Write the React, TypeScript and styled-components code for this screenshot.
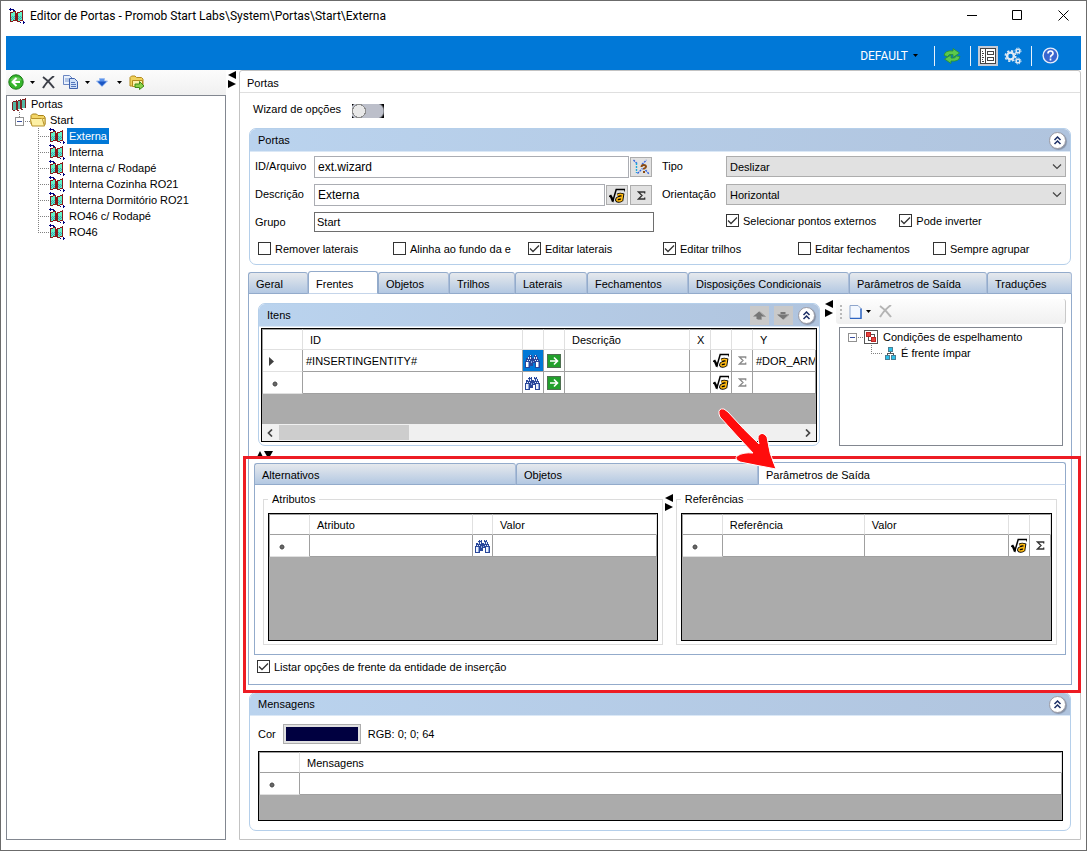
import React, { useState } from "react";
import styled, { createGlobalStyle, css } from "styled-components";

const GlobalStyle = createGlobalStyle`
  * { box-sizing: border-box; }
  body {
    margin: 0;
    background: #fff;
    color: #000;
    font-family: "Liberation Sans", Arial, sans-serif;
    font-size: 11px;
    line-height: 14px;
  }
  button, input, select { font: inherit; color: inherit; margin: 0; }
  button { padding: 0; border: 0; background: none; }
  svg { display: block; flex: none; }
`;

/* ---------- window frame ---------- */

const Window = styled.div`
  display: flex;
  flex-direction: column;
  min-height: 100vh;
  min-width: 1000px;
  border: 1px solid #6b6b6b;
  padding: 0 5px 10px;
`;

const TitleBar = styled.header`
  display: flex;
  align-items: center;
  height: 35px;
  padding: 0 12px 6px 3px;
  gap: 5px;
`;

const Title = styled.h1`
  flex: 1;
  margin: 0;
  font: 400 12px/16px Roboto, "Open Sans", sans-serif;
`;

const WindowButtons = styled.div`
  display: flex;
  gap: 35px;
`;

const Ribbon = styled.div`
  display: flex;
  justify-content: flex-end;
  align-items: center;
  height: 34px;
  padding: 5px 22px 0 0;
  background: #0078d7;
  color: #fff;
`;

const ProfileButton = styled.button`
  display: flex;
  align-items: center;
  gap: 5px;
  margin-right: 16px;
  font: 400 12px/16px Roboto, "Open Sans", sans-serif;
`;

const RibbonRule = styled.span`
  width: 1px;
  height: 20px;
  background: #e8f2fb;
`;

const RibbonButton = styled.button<{ $active?: boolean }>`
  display: grid;
  place-items: center;
  width: 20px;
  height: 20px;
  background: ${(p) => (p.$active ? "#c5cbd6" : "transparent")};
`;

const RibbonGroup = styled.div`
  display: flex;
  gap: 5px;
  padding: 0 8px 0 7px;
`;

const HelpButton = styled.button`
  padding-left: 10px;
`;

const Workspace = styled.div`
  flex: 1;
  display: flex;
`;

/* ---------- left side ---------- */

const Sidebar = styled.aside`
  display: flex;
  flex-direction: column;
  width: 220px;
  flex: none;
`;

const SideTools = styled.div`
  display: flex;
  align-items: center;
  height: 25px;
  padding: 0 0 1px 2px;
  background: linear-gradient(#fcfcfc, #f0f0f0);
`;

const ToolButton = styled.button<{ $space?: number }>`
  margin-right: ${(p) => p.$space ?? 6}px;
`;

const TreeBox = styled.div`
  flex: 1;
  border: 1px solid #828790;
  background: #fff;
`;

const TreeRow = styled.div<{ $indent: number }>`
  display: flex;
  align-items: center;
  height: 16px;
  padding-left: ${(p) => p.$indent}px;
`;

const TreeLabel = styled.span<{ $selected?: boolean }>`
  margin-left: 2px;
  padding: 0 2px;
  line-height: 16px;
  white-space: nowrap;
  ${(p) => p.$selected && css`background: #0078d7; color: #fff;`}
`;

const Splitter = styled.div<{ $width: number; $top: number; $left?: number }>`
  flex: none;
  width: ${(p) => p.$width}px;
  padding: ${(p) => p.$top}px 0 0 ${(p) => p.$left ?? 2}px;
`;

/* ---------- main panel ---------- */

const MainPanel = styled.main`
  flex: 1;
  min-width: 0;
  border: 1px solid #c3c3c3;
  border-radius: 3px 3px 0 0;
`;

const PanelTitle = styled.h2`
  margin: 0;
  height: 22px;
  padding: 5px 7px 0;
  border-bottom: 1px solid #dfdfdf;
  font: inherit;
`;

const PanelContent = styled.div`
  padding: 0 8px 8px;
`;

const WizardRow = styled.label`
  display: flex;
  align-items: center;
  gap: 11px;
  height: 35px;
  padding-left: 5px;
`;

const WizardText = styled.span`
  padding-bottom: 4px;
`;

const Toggle = styled.input.attrs({ type: "checkbox", role: "switch" })`
  appearance: none;
  width: 32px;
  height: 14px;
  background: radial-gradient(circle at 7px 7px, #e8e8e8 0 6px, #8c8c8c 6px 7px, transparent 7px),
    radial-gradient(circle at 7px 7px, #bcbfca 8px, #000 9px) 0 0 / 8px 14px no-repeat,
    radial-gradient(circle at 0px 7px, #bcbfca 7px, #000 9px) 100% 0 / 8px 14px no-repeat,
    #bcbfca;
`;

const GroupFrame = styled.section`
  min-width: 0;
  border: 1px solid #b5cfea;
  border-radius: 7px;
`;

const GroupHeader = styled.header`
  display: flex;
  align-items: center;
  gap: 5px;
  height: 23px;
  padding: 0 4px 0 8px;
  border-bottom: 1px solid #dbe8f6;
  border-radius: 6px 6px 0 0;
  background: linear-gradient(90deg, #bad3ee, #b0c4de);
`;

const GroupTitle = styled.h3`
  flex: 1;
  margin: 0;
  font: inherit;
`;

const CollapseButton = styled.button`
  display: grid;
  place-items: center;
  width: 17px;
  height: 17px;
  border: 1px solid #9a9aa4;
  border-radius: 9px;
  background: #fff;
  box-shadow: 1px 1px 1px #8592a8;
`;

const MoveButton = styled.button`
  display: grid;
  place-items: center;
  width: 19px;
  height: 19px;
  background: #c9c9c9;
`;

const Spaced = styled.div`
  padding: 0 1px;
`;

const FormBody = styled.div`
  display: flex;
  gap: 8px;
  padding: 4px 4px 0 5px;
`;

const FormColumn = styled.div<{ $grow: number }>`
  flex: ${(p) => p.$grow} 1 0;
  min-width: 0;
`;

const FieldRow = styled.div<{ $buttons?: boolean }>`
  display: flex;
  align-items: flex-start;
  gap: 1px;
  height: 28px;
  padding-right: ${(p) => (p.$buttons ? 1 : 0)}px;
`;

const FieldLabel = styled.label<{ $width: number }>`
  flex: none;
  width: ${(p) => p.$width}px;
  padding-top: 3px;
`;

const TextInput = styled.input<{ $plain?: boolean }>`
  flex: 1;
  min-width: 0;
  height: ${(p) => (p.$plain ? 20 : 22)}px;
  padding: 0 ${(p) => (p.$plain ? 2 : 3)}px;
  border: 1px solid ${(p) => (p.$plain ? "#6e6e6e" : "#abadb3")};
  background: #fff;
  font-size: ${(p) => (p.$plain ? 11 : 12)}px;
`;

const SquareButton = styled.button`
  display: grid;
  place-items: center;
  width: 22px;
  height: 20px;
  margin: 1px 1px 0 0;
  border: 1px solid #adadad;
  background: #e1e1e1;
`;

const SelectShell = styled.div`
  flex: 1;
  display: grid;
  align-items: center;
  & > * { grid-area: 1 / 1; }
  & > svg { justify-self: end; margin-right: 4px; pointer-events: none; }
`;

const Select = styled.select`
  appearance: none;
  width: 100%;
  height: 21px;
  padding: 0 3px;
  border: 1px solid #adadad;
  border-radius: 0;
  background: #e1e1e1;
`;

const CheckPair = styled.div`
  display: flex;
  gap: 23px;
  padding: 2px 0 0 64px;
`;

const CheckGrid = styled.div`
  display: grid;
  grid-template-columns: repeat(6, 1fr);
  padding: 2px 2px 9px 8px;
`;

const CheckRow = styled.div`
  padding: 5px 8px 11px;
`;

const CheckLabel = styled.label`
  display: flex;
  align-items: center;
  gap: 4px;
  height: 13px;
  white-space: nowrap;
`;

const CheckBox = styled.input.attrs({ type: "checkbox" })`
  appearance: none;
  flex: none;
  width: 13px;
  height: 13px;
  border: 1px solid #333;
  background: #fff;
`;

const CheckShell = styled.span`
  display: grid;
  place-items: center;
  & > * { grid-area: 1 / 1; }
  & > svg { pointer-events: none; }
`;

/* ---------- tabs ---------- */

const TabStrip = styled.div<{ $columns: number[] }>`
  display: grid;
  grid-template-columns: ${(p) => p.$columns.map((c) => `minmax(0, ${c}fr)`).join(" ")};
  align-items: end;
  height: 23px;
`;

const Tab = styled.button<{ $selected?: boolean }>`
  position: relative;
  height: ${(p) => (p.$selected ? 23 : 22)}px;
  padding: 2px 0 0 7px;
  border: 1px solid #93abcb;
  border-right-color: ${(p) => (p.$selected ? "#93abcb" : "#a9bcd8")};
  border-bottom-color: ${(p) => (p.$selected ? "#c5d5ea" : "#93abcb")};
  border-radius: 3px 3px 0 0;
  background: ${(p) => (p.$selected ? "#fff" : "linear-gradient(#e6e9ed, #b3c8e2)")};
  text-align: left;
  white-space: nowrap;
`;

const TabPage = styled.div`
  border: 1px solid #93abcb;
  border-top: 0;
`;

const Pointer = styled.svg`
  position: absolute;
  left: -43px;
  top: -57px;
  z-index: 3;
  pointer-events: none;
`;

const ItemsArea = styled.div`
  display: flex;
  padding: 0 5px 0 9px;
`;

const ItemsColumn = styled.div`
  flex: 562 1 0;
  min-width: 0;
  padding-top: 9px;
`;

const ItemsBody = styled.div`
  padding: 1px 2px 3px;
`;

const ConditionColumn = styled.div`
  flex: 230 1 0;
  display: flex;
  flex-direction: column;
  padding-top: 5px;
`;

const ConditionTools = styled.div`
  display: flex;
  align-items: center;
  height: 25px;
  padding-left: 4px;
  border-right: 1px solid #c9c9c9;
  border-radius: 3px;
  background: linear-gradient(#fdfdfd, #f0f0f0);
`;

const ConditionTree = styled(TreeBox)`
  margin: 3px 3px 0;
  padding-top: 1px;
`;

const OutputPane = styled.div`
  position: relative;
`;

const Highlight = styled.div`
  position: absolute;
  inset: 10px -10px -9px -6px;
  z-index: 2;
  border: 3px solid #ed1c24;
  pointer-events: none;
`;

const RowSplitter = styled.div`
  height: 16px;
  padding: 5px 0 0 7px;
`;

const InnerTabs = styled.div`
  padding: 0 5px;
`;

const OutputBody = styled.div`
  display: flex;
  padding: 7px 8px 9px;
`;

const Fieldset = styled.fieldset<{ $grow: number }>`
  flex: ${(p) => p.$grow} 1 0;
  min-width: 0;
  margin: 0;
  padding: 7px 4px 3px;
  border: 1px solid #dcdcdc;
`;

const Legend = styled.legend`
  padding: 0 4px;
`;

/* ---------- data grids ---------- */

const GridFrame = styled.div<{ $height: number }>`
  display: flex;
  flex-direction: column;
  justify-content: space-between;
  height: ${(p) => p.$height}px;
  border: 1px solid #000;
  background: #ababab;
  overflow: hidden;
`;

const Table = styled.table`
  width: 100%;
  table-layout: fixed;
  border-collapse: separate;
  border-spacing: 0;
  border-left: 1px solid #a0a0a0;
  background: #fff;
`;

const HeadCell = styled.th<{ $line?: string }>`
  height: 21px;
  padding: 0 6px 0 7px;
  border-top: 1px solid #a0a0a0;
  border-bottom: 1px solid ${(p) => p.$line ?? "#a0a0a0"};
  border-right: 1px solid #e0e0e0;
  font-weight: 400;
  text-align: left;
  white-space: nowrap;
`;

const Cell = styled.td<{ $selected?: boolean }>`
  height: 22px;
  padding: 0 0 0 3px;
  border-bottom: 1px solid #a0a0a0;
  border-right: 1px solid #a0a0a0;
  background: ${(p) => (p.$selected ? "#0078d7" : "#fff")};
  white-space: nowrap;
  overflow: hidden;
`;

const IconCell = styled(Cell)`
  padding: 0;
  & > svg, & > button > svg { margin: 0 auto; }
  & > button { display: block; width: 100%; }
`;

const RowHead = styled.th`
  height: 22px;
  padding: 2px 0 0 6px;
  border-bottom: 1px solid #e0e0e0;
  border-right: 1px solid #a0a0a0;
`;

const ScrollBar = styled.div`
  display: flex;
  align-items: center;
  height: 17px;
  padding: 0 5px;
  background: #f0f0f0;
`;

const ScrollTrack = styled.div`
  flex: 1;
  padding: 0 6px;
`;

const ScrollThumb = styled.div`
  width: 25%;
  height: 15px;
  background: #cdcdcd;
`;

const MessagesBody = styled.div`
  padding: 8px 7px 9px 8px;
`;

const ColorRow = styled.div`
  display: flex;
  align-items: center;
  height: 20px;
  margin-bottom: 7px;
  gap: 7px;
`;

const ColorButton = styled.button`
  width: 78px;
  height: 20px;
  border: 1px solid #adadad;
  padding: 2px;
  background: #e1e1e1;
`;

const ColorFill = styled.span`
  display: block;
  height: 14px;
  background: #000040;
`;

const Gap = styled.div<{ $height: number }>`
  height: ${(p) => p.$height}px;
`;

/* ---------- icons ---------- */

const DoorIcon = () => (
  <svg width="16" height="16" viewBox="0 0 16 16" shapeRendering="crispEdges">
    <path d="M2 4h4v9h-4zM9 4h4v9h-4z" fill="#63f2c8" />
    <path d="M3 8h1v1h-1zM5 8h1v1h-1zM2 9h1v1h-1zM4 9h1v1h-1zM3 10h1v1h-1zM5 10h1v1h-1zM4 11h1v1h-1zM2 11h1v1h-1zM9 8h1v1h-1zM11 8h1v1h-1zM10 9h1v1h-1zM12 9h1v1h-1zM9 10h1v1h-1zM11 10h1v1h-1zM10 11h1v1h-1z" fill="#3aa7b8" />
    <path d="M1 4h1v10h-1zM2 13h2v1h-2zM4 12h2v1h-2zM2 4h2v1h-2zM4 3h2v1h-2zM6 3h1v10h-1zM7 5h1v8h-1zM8 4h1v10h-1zM9 13h2v1h-2zM11 12h2v1h-2zM9 4h2v1h-2zM11 3h2v1h-2zM13 2h1v11h-1z" fill="#861919" />
    <path d="M0 1h1v-1h1v1h3v1h1v1h-2v-1h-2v1h-1v-1h-1zM10 14h2v1h2v-2h1v1h1v1h-1v1h-1v-1h-3v-1h-1z" fill="#000080" />
  </svg>
);

const DoorsIcon = () => (
  <svg width="15" height="15" viewBox="0 0 15 15" shapeRendering="crispEdges">
    <path d="M1 4h3v9h-3zM6 3h3v9h-3zM10 2h4v9h-4z" fill="#55b8a3" />
    <path d="M0 5h1v8h-1zM4 3h1v10h-1zM5 4h1v9h-1zM8 2h1v10h-1zM9 3h1v9h-1zM13 1h1v10h-1zM1 4h3v1h-3zM6 3h2v1h-2zM10 2h3v1h-3zM1 13h2v1h-2zM5 13h2v1h-2zM9 12h2v1h-2z" fill="#7c2222" />
  </svg>
);

const FolderIcon = () => (
  <svg width="16" height="14" viewBox="0 0 16 14">
    <path d="M1 11V2.500L2.500 1h4L8 2.500h5.500L15 4v7z" fill="#f3d567" stroke="#a8841a" />
    <path d="M2 13L.5 6.500 1.500 5.500h10l1 1L14.500 13z M12 6l3-1v7" fill="#fdf0a4" stroke="#b8922a" />
  </svg>
);

const Expander = () => (
  <svg width="15" height="16" viewBox="0 0 15 16" shapeRendering="crispEdges">
    <path d="M4.500 0v5" stroke="#808080" strokeDasharray="1 1" />
    <path d="M10 9.500h5" stroke="#808080" strokeDasharray="1 1" />
    <rect x=".5" y="5.500" width="8" height="8" fill="#fff" stroke="#919191" />
    <path d="M2 9.500h5" stroke="#3a4fa0" />
  </svg>
);

const CenterExpander = () => (
  <svg width="16" height="16" viewBox="0 0 16 16" shapeRendering="crispEdges">
    <path d="M10 8.500h6" stroke="#808080" strokeDasharray="1 1" />
    <rect x=".5" y="4.500" width="8" height="8" fill="#fff" stroke="#919191" />
    <path d="M2 8.500h5" stroke="#3a4fa0" />
  </svg>
);

const Branch = ({ last }: { last?: boolean }) => (
  <svg width="11" height="16" viewBox="0 0 11 16" shapeRendering="crispEdges">
    <path d={last ? "M.5 0v9" : "M.5 0v16"} stroke="#808080" strokeDasharray="1 1" />
    <path d="M2 8.500h9" stroke="#808080" strokeDasharray="1 1" />
  </svg>
);

const Caret = () => (
  <svg width="5" height="3" viewBox="0 0 5 3"><path d="M0 0h5L2.500 3z" fill="#000" /></svg>
);

const BackIcon = () => (
  <svg width="16" height="16" viewBox="0 0 16 16">
    <circle cx="8" cy="8" r="7.200" fill="#35b52c" stroke="#1c7a18" />
    <path d="M2.500 6a6 5 0 0 1 11 0q-5 3-11 0z" fill="#8fdc80" opacity=".6" />
    <path d="M8.500 4L4.500 8l4 4M5 8h7" fill="none" stroke="#fff" strokeWidth="2" />
  </svg>
);

const CutIcon = ({ muted }: { muted?: boolean }) => (
  <svg width="13" height="13" viewBox="0 0 13 13">
    <path d="M1 1q6 4 11 11M12 0Q5 5 1 12" fill="none" stroke={muted ? "#b4b4b4" : "#3c3f48"} strokeWidth="2" />
  </svg>
);

const CopyIcon = () => (
  <svg width="16" height="14" viewBox="0 0 16 14">
    <path d="M.5.5h6l3 3v6h-9z" fill="#e9f1fc" stroke="#6b87c2" />
    <path d="M2 4h4M2 6h4" stroke="#7f9bd0" />
    <path d="M6.500 3.500h5l3 3v7h-8z" fill="#cfe0f8" stroke="#3f62ad" />
    <path d="M8 7.500h4M8 9.500h5M8 11.500h5" stroke="#5577bd" />
  </svg>
);

const BlueDownIcon = () => (
  <svg width="12" height="9" viewBox="0 0 12 9">
    <path d="M3.500.5h5V3h3L6 8.500.5 3h3z" fill="#5a93ec" stroke="#9dbdf0" />
    <path d="M1.500 3.500h9L6 8z" fill="#1c57c4" />
  </svg>
);

const FolderGoIcon = () => (
  <svg width="16" height="15" viewBox="0 0 16 15">
    <path d="M1 11V2.500L2.500 1H6l1.500 1.500h5L14 4v7z" fill="#f0d25c" stroke="#b38a1d" />
    <path d="M3.500 11.500v-6h10v6z" fill="#fdf1a8" stroke="#b38a1d" />
    <path d="M6 9h4.500V6.500l4.500 4.500-4.500 3.500V12.500H6z" fill="#8bd14a" stroke="#3f8a1a" />
  </svg>
);

const SplitArrows = () => (
  <svg width="8" height="17" viewBox="0 0 8 17"><path d="M8 0v8L0 4zM0 9v8l8-4z" fill="#000" /></svg>
);

const StackArrows = () => (
  <svg width="17" height="8" viewBox="0 0 17 8"><path d="M0 8h8L4 0zM8 0h9l-4.500 8z" fill="#000" /></svg>
);

const RefreshIcon = () => (
  <svg width="18" height="18" viewBox="0 0 18 18">
    <path d="M1 8.500Q2 3 10 4V1.500L16.500 6 10 10.500V7.500Q6 6.500 4.500 9.500z" fill="#5cc94c" stroke="#2b8f2a" strokeWidth=".8" />
    <path d="M17 9.500Q16 15 8 14v2.500L1.500 12 8 8V11q4 .8 5.500-2z" fill="#5cc94c" stroke="#2b8f2a" strokeWidth=".8" />
  </svg>
);

const LayoutIcon = () => (
  <svg width="18" height="16" viewBox="0 0 18 16" shapeRendering="crispEdges">
    <rect x="1.500" y=".5" width="15" height="15" fill="#fff" stroke="#444" />
    <path d="M6.500 1v14M3 3.500h1M3 5.500h2M3 7.500h1M3 9.500h2M3 11.500h1M3 13.500h2" stroke="#444" />
    <rect x="8.500" y="3.500" width="6" height="3" fill="#fff" stroke="#444" />
    <rect x="8.500" y="9.500" width="6" height="3" fill="#fff" stroke="#444" />
  </svg>
);

const GearsIcon = () => (
  <svg width="18" height="18" viewBox="0 0 18 18" fill="none" stroke="#dfe9f3">
    <circle cx="6.500" cy="9" r="3.400" strokeWidth="2.400" />
    <circle cx="6.500" cy="9" r="5.200" strokeWidth="1.600" strokeDasharray="2.200 1.880" />
    <circle cx="14" cy="4" r="1.800" strokeWidth="1.500" />
    <circle cx="14" cy="4" r="3" strokeDasharray="1.300 1.060" />
    <circle cx="14" cy="14" r="1.800" strokeWidth="1.500" />
    <circle cx="14" cy="14" r="3" strokeDasharray="1.300 1.060" />
  </svg>
);

const HelpIcon = () => (
  <svg width="17" height="17" viewBox="0 0 17 17">
    <circle cx="8.500" cy="8.500" r="7.400" fill="#3a66cf" stroke="#e8eefa" strokeWidth="1.400" />
    <path d="M6 6.500Q6 4 8.500 4T11 6.500Q11 7.600 9.600 8.300 8.500 9 8.500 10.400M8.500 11.500v2" fill="none" stroke="#fff" strokeWidth="1.700" />
  </svg>
);

const ChevronsUp = () => (
  <svg width="9" height="9" viewBox="0 0 9 9">
    <path d="M1.500 4L4.500 1l3 3M1.500 8l3-3 3 3" fill="none" stroke="#1c2f66" strokeWidth="1.500" />
  </svg>
);

const MoveIcon = ({ down }: { down?: boolean }) => (
  <svg width="13" height="9" viewBox="0 0 13 9">
    <path d={down ? "M3.500 1h5v2.500h3.500L6 8.500 0 3.500h3.500z" : "M6 .5L12 5.500H8.500V8h-5V5.500H0z"} fill="#767676" />
    <path d={down ? "M1 3.500h11L6.500 8.500" : "M6.500.5L12.500 5.500H8.500V8.500h-4"} fill="none" stroke="#9a9a9a" />
  </svg>
);

const SelectChevron = () => (
  <svg width="10" height="6" viewBox="0 0 10 6"><path d="M1 .5L5 4.500 9 .5" fill="none" stroke="#444" strokeWidth="1.200" /></svg>
);

const PickIcon = () => (
  <svg width="18" height="16" viewBox="0 0 18 16">
    <path d="M1.500 1l3.500 3.500" stroke="#2f62e0" strokeWidth="1.400" strokeDasharray="2 1" />
    <path d="M4.500 4v10" stroke="#19a9dc" strokeWidth="1.400" strokeDasharray="2 1" />
    <path d="M5.500 14.500l5-5M10 5.500l4.500-4.500M13.500 11l3.500 4" stroke="#2f62e0" strokeWidth="1.400" strokeDasharray="2 1" />
    <path d="M9.500 8Q9.500 6 11.800 6t2.200 1.800q0 1-2 1.800v1M12 12v2" fill="none" stroke="#8a4b12" strokeWidth="2" />
  </svg>
);

const RootIcon = () => (
  <svg width="16" height="15" viewBox="0 0 16 15">
    <path d="M0 8.500l1.800-1L4 12.500 7.200 1.500H16v2" fill="none" stroke="#000" strokeWidth="1.500" />
    <path d="M1.800 8L4 13.500" stroke="#000" strokeWidth="2.200" />
    <path d="M8.500 7.200Q11 5.800 13.500 6.800L12.500 13M13 9.700Q8 9.300 7.800 12q.8 2 4.800.2" fill="none" stroke="#000" strokeWidth="3.400" />
    <path d="M8.500 7.200Q11 5.800 13.500 6.800L12.500 13M13 9.700Q8 9.300 7.800 12q.8 2 4.800.2" fill="none" stroke="#fdb913" strokeWidth="1.600" />
  </svg>
);

const SigmaIcon = ({ tone = "#333" }: { tone?: string }) => (
  <svg width="9" height="9" viewBox="0 0 9 9">
    <path d="M7.700 2.500V1H1.500L5 4.500 1.500 8H7.700V6.500" fill="none" stroke={tone} strokeWidth="1.300" />
  </svg>
);

const BinocularsIcon = ({ light }: { light?: boolean }) => (
  <svg width="16" height="14" viewBox="0 0 16 14" shapeRendering="crispEdges">
    <path d="M4 1h3v3h1v8h-3v2h-5v-7h1v-3h2v-2h1zM9 1h3v2h1v2h1v2h1v7h-5v-5h-2v-5h1z" fill="#29479a" />
    <path d="M5 1h1v1h-1zM3 3h1v2h-1zM5 3h1v2h-1zM10 1h1v1h-1zM9 3h1v2h-1zM11 3h1v2h-1zM2 6h1v1h-1zM4 6h1v1h-1zM10 6h1v1h-1zM12 6h1v1h-1z" fill="#dfe8fb" />
    <path d="M1 8h2v5h-2zM11 8h2v5h-2z" fill={light ? "#fff" : "#eef3fd"} />
    <path d="M3 8h1v5h-1zM13 8h1v5h-1z" fill="#8aa4dd" />
    <path d="M6 7h1v2h-1zM8 7h1v1h-1z" fill="#8aa4dd" />
  </svg>
);

const GoIcon = () => (
  <svg width="14" height="14" viewBox="0 0 14 14">
    <rect x=".5" y=".5" width="13" height="13" fill="#22a02c" stroke="#4d6f50" />
    <path d="M3 7h7M7 3.500L10.500 7 7 10.500" fill="none" stroke="#fff" strokeWidth="1.600" />
  </svg>
);

const CurrentMark = () => (
  <svg width="6" height="9" viewBox="0 0 6 9"><path d="M0 0v9l5-4.500z" fill="#404040" /></svg>
);

const NewMark = () => (
  <svg width="9" height="6" viewBox="0 0 9 6">
    <circle cx="6" cy="3" r="2.200" fill="#4a4a4a" />
    <path d="M6 0v6M3 3h6M4 1l4 4M8 1L4 5" stroke="#6a6a6a" strokeWidth=".8" />
  </svg>
);

const CheckMark = () => (
  <svg width="11" height="9" viewBox="0 0 11 9"><path d="M1 4.500L4 7.500 10 1.500" fill="none" stroke="#333" strokeWidth="1.300" /></svg>
);

const ScrollChevron = ({ right }: { right?: boolean }) => (
  <svg width="6" height="8" viewBox="0 0 6 8"><path d={right ? "M1 .5L4.500 4 1 7.500" : "M5 .5L1.500 4 5 7.500"} fill="none" stroke="#444" strokeWidth="1.700" /></svg>
);

const PageIcon = () => (
  <svg width="13" height="14" viewBox="0 0 13 14">
    <path d="M1 .5h8l3 3v10H1z" fill="#f3f8ff" stroke="#8fa6cc" />
    <path d="M12 3.500v10H1" fill="none" stroke="#2e66c4" strokeWidth="1.400" />
  </svg>
);

const GripIcon = () => (
  <svg width="2" height="14" viewBox="0 0 2 14"><path d="M1 0v14" stroke="#b9b9b9" strokeWidth="2" strokeDasharray="2 2" /></svg>
);

const ConditionIcon = () => (
  <svg width="15" height="15" viewBox="0 0 15 15" shapeRendering="crispEdges">
    <rect x=".5" y=".5" width="13" height="13" fill="#fff" stroke="#555" />
    <path d="M4.500 7v3.500H8M7 4.500h3V7" fill="none" stroke="#555" />
    <rect x="2.500" y="2.500" width="4" height="4" fill="#e8433c" stroke="#b22" />
    <rect x="7.500" y="7.500" width="4" height="4" fill="#e8433c" stroke="#b22" />
  </svg>
);

const HierarchyIcon = () => (
  <svg width="15" height="13" viewBox="-3 0 15 13" shapeRendering="crispEdges">
    <path d="M5.500 4v3M2.500 9V6.500h6V9" fill="none" stroke="#555" />
    <rect x="3.500" y=".5" width="4" height="4" fill="#2fc0ea" stroke="#4a7f94" />
    <rect x=".5" y="8.500" width="4" height="4" fill="#2fc0ea" stroke="#4a7f94" />
    <rect x="6.500" y="8.500" width="4" height="4" fill="#2fc0ea" stroke="#4a7f94" />
  </svg>
);

/* ---------- composed parts ---------- */

function Check({ label, on }: { label: string; on?: boolean }) {
  const [checked, setChecked] = useState(!!on);
  return (
    <CheckLabel>
      <CheckShell>
        <CheckBox checked={checked} onChange={() => setChecked(!checked)} />
        {checked && <CheckMark />}
      </CheckShell>
      {label}
    </CheckLabel>
  );
}

function Collapse({ name }: { name: string }) {
  return (
    <CollapseButton type="button" aria-label={"Recolher " + name}>
      <ChevronsUp />
    </CollapseButton>
  );
}

const mainTabs = [
  { name: "Geral", share: 60 },
  { name: "Frentes", share: 70 },
  { name: "Objetos", share: 71 },
  { name: "Trilhos", share: 66 },
  { name: "Laterais", share: 72 },
  { name: "Fechamentos", share: 101 },
  { name: "Disposições Condicionais", share: 161 },
  { name: "Parâmetros de Saída", share: 138 },
  { name: "Traduções", share: 85 },
];

const treeItems = [
  "Externa",
  "Interna",
  "Interna c/ Rodapé",
  "Interna Cozinha RO21",
  "Interna Dormitório RO21",
  "RO46 c/ Rodapé",
  "RO46",
];

const Columns = ({ widths }: { widths: (number | undefined)[] }) => (
  <colgroup>
    {widths.map((w, i) => (
      <col key={i} width={w} />
    ))}
  </colgroup>
);

function ItemRow({ id, y, current }: { id?: string; y?: string; current?: boolean }) {
  return (
    <tr>
      <RowHead scope="row">{current ? <CurrentMark /> : <NewMark />}</RowHead>
      <Cell>{id}</Cell>
      <IconCell $selected={current}>
        <button type="button" aria-label="Procurar"><BinocularsIcon light={current} /></button>
      </IconCell>
      <IconCell>
        <button type="button" aria-label="Abrir"><GoIcon /></button>
      </IconCell>
      <Cell />
      <Cell />
      <IconCell><RootIcon /></IconCell>
      <IconCell><SigmaIcon tone="#8a8a8a" /></IconCell>
      <Cell>{y}</Cell>
    </tr>
  );
}

export default function App() {
  return (
    <>
      <GlobalStyle />
      <Window>
        <TitleBar>
          <DoorIcon />
          <Title>Editor de Portas - Promob Start Labs\System\Portas\Start\Externa</Title>
          <WindowButtons>
            <button type="button" aria-label="Minimizar">
              <svg width="10" height="11" viewBox="0 0 10 11"><path d="M0 5.500h10" stroke="#000" /></svg>
            </button>
            <button type="button" aria-label="Maximizar">
              <svg width="11" height="11" viewBox="0 0 11 11"><path d="M.5.5h9v9h-9z" fill="none" stroke="#000" /></svg>
            </button>
            <button type="button" aria-label="Fechar">
              <svg width="11" height="11" viewBox="0 0 11 11"><path d="M.5.5l10 10M10.500.5l-10 10" stroke="#000" /></svg>
            </button>
          </WindowButtons>
        </TitleBar>

        <Ribbon>
          <ProfileButton type="button">DEFAULT<Caret /></ProfileButton>
          <RibbonRule />
          <RibbonGroup>
            <RibbonButton type="button" aria-label="Atualizar"><RefreshIcon /></RibbonButton>
          </RibbonGroup>
          <RibbonRule />
          <RibbonGroup>
            <RibbonButton type="button" $active aria-label="Painel"><LayoutIcon /></RibbonButton>
            <RibbonButton type="button" aria-label="Configurações"><GearsIcon /></RibbonButton>
          </RibbonGroup>
          <RibbonRule />
          <HelpButton type="button" aria-label="Ajuda"><HelpIcon /></HelpButton>
        </Ribbon>

        <Workspace>
          <Sidebar>
            <SideTools>
              <ToolButton type="button" aria-label="Novo"><BackIcon /></ToolButton>
              <ToolButton type="button" $space={7} aria-label="Opções de novo"><Caret /></ToolButton>
              <ToolButton type="button" $space={8} aria-label="Excluir"><CutIcon /></ToolButton>
              <ToolButton type="button" aria-label="Copiar"><CopyIcon /></ToolButton>
              <ToolButton type="button" aria-label="Opções de cópia"><Caret /></ToolButton>
              <ToolButton type="button" $space={9} aria-label="Mover"><BlueDownIcon /></ToolButton>
              <ToolButton type="button" $space={7} aria-label="Opções de mover"><Caret /></ToolButton>
              <ToolButton type="button" aria-label="Importar"><FolderGoIcon /></ToolButton>
            </SideTools>
            <TreeBox>
              <TreeRow $indent={5}><DoorsIcon /><TreeLabel>Portas</TreeLabel></TreeRow>
              <TreeRow $indent={8}><Expander /><FolderIcon /><TreeLabel>Start</TreeLabel></TreeRow>
              {treeItems.map((name, i) => (
                <TreeRow key={name} $indent={31}>
                  <Branch last={i === treeItems.length - 1} />
                  <DoorIcon />
                  <TreeLabel $selected={i === 0}>{name}</TreeLabel>
                </TreeRow>
              ))}
            </TreeBox>
          </Sidebar>

          <Splitter $width={13} $top={1}><SplitArrows /></Splitter>

          <MainPanel>
            <PanelTitle>Portas</PanelTitle>
            <PanelContent>
              <WizardRow><WizardText>Wizard de opções</WizardText><Toggle /></WizardRow>

              <Spaced>
                <GroupFrame>
                  <GroupHeader><GroupTitle>Portas</GroupTitle><Collapse name="Portas" /></GroupHeader>
                  <FormBody>
                    <FormColumn $grow={399}>
                      <FieldRow $buttons>
                        <FieldLabel htmlFor="file" $width={58}>ID/Arquivo</FieldLabel>
                        <TextInput id="file" defaultValue="ext.wizard" />
                        <SquareButton type="button" aria-label="Selecionar"><PickIcon /></SquareButton>
                      </FieldRow>
                      <FieldRow $buttons>
                        <FieldLabel htmlFor="description" $width={58}>Descrição</FieldLabel>
                        <TextInput id="description" defaultValue="Externa" />
                        <SquareButton type="button" aria-label="Fórmula"><RootIcon /></SquareButton>
                        <SquareButton type="button" aria-label="Somatório"><SigmaIcon /></SquareButton>
                      </FieldRow>
                      <FieldRow>
                        <FieldLabel htmlFor="group" $width={58}>Grupo</FieldLabel>
                        <TextInput id="group" $plain defaultValue="Start" />
                      </FieldRow>
                    </FormColumn>
                    <FormColumn $grow={404}>
                      <FieldRow>
                        <FieldLabel htmlFor="type" $width={63}>Tipo</FieldLabel>
                        <SelectShell>
                          <Select id="type"><option>Deslizar</option></Select>
                          <SelectChevron />
                        </SelectShell>
                      </FieldRow>
                      <FieldRow>
                        <FieldLabel htmlFor="orientation" $width={63}>Orientação</FieldLabel>
                        <SelectShell>
                          <Select id="orientation"><option>Horizontal</option></Select>
                          <SelectChevron />
                        </SelectShell>
                      </FieldRow>
                      <CheckPair>
                        <Check label="Selecionar pontos externos" on />
                        <Check label="Pode inverter" on />
                      </CheckPair>
                    </FormColumn>
                  </FormBody>
                  <CheckGrid>
                    <Check label="Remover laterais" />
                    <Check label="Alinha ao fundo da e" />
                    <Check label="Editar laterais" on />
                    <Check label="Editar trilhos" on />
                    <Check label="Editar fechamentos" />
                    <Check label="Sempre agrupar" />
                  </CheckGrid>
                </GroupFrame>
              </Spaced>

              <Gap $height={6} />

              <TabStrip role="tablist" $columns={mainTabs.map((t) => t.share)}>
                {mainTabs.map((t, i) => (
                  <Tab key={t.name} type="button" role="tab" $selected={i === 1} aria-selected={i === 1}>
                    {t.name}
                  </Tab>
                ))}
              </TabStrip>
              <TabPage>
                <ItemsArea>
                  <ItemsColumn>
                    <GroupFrame>
                      <GroupHeader>
                        <GroupTitle>Itens</GroupTitle>
                        <MoveButton type="button" aria-label="Subir"><MoveIcon /></MoveButton>
                        <MoveButton type="button" aria-label="Descer"><MoveIcon down /></MoveButton>
                        <Collapse name="Itens" />
                      </GroupHeader>
                      <ItemsBody>
                        <GridFrame $height={114}>
                          <Table>
                            <Columns widths={[40, 220, 21, 21, 125, 21, 21, 21, undefined]} />
                            <thead>
                              <tr>
                                {["", "ID", "", "", "Descrição", "X", "", "", "Y"].map((h, i) => (
                                  <HeadCell key={i} $line="#e0e0e0">{h}</HeadCell>
                                ))}
                              </tr>
                            </thead>
                            <tbody>
                              <ItemRow current id="#INSERTINGENTITY#" y="#DOR_ARM" />
                              <ItemRow />
                            </tbody>
                          </Table>
                          <ScrollBar>
                            <ScrollChevron />
                            <ScrollTrack><ScrollThumb /></ScrollTrack>
                            <ScrollChevron right />
                          </ScrollBar>
                        </GridFrame>
                      </ItemsBody>
                    </GroupFrame>
                  </ItemsColumn>
                  <Splitter $width={16} $top={6} $left={5}><SplitArrows /></Splitter>
                  <ConditionColumn>
                    <ConditionTools>
                      <ToolButton as="span" $space={7}><GripIcon /></ToolButton>
                      <ToolButton type="button" $space={4} aria-label="Nova condição"><PageIcon /></ToolButton>
                      <ToolButton type="button" $space={8} aria-label="Opções de condição"><Caret /></ToolButton>
                      <ToolButton type="button" aria-label="Excluir condição"><CutIcon muted /></ToolButton>
                    </ConditionTools>
                    <ConditionTree>
                      <TreeRow $indent={8}>
                        <CenterExpander />
                        <ConditionIcon />
                        <TreeLabel>Condições de espelhamento</TreeLabel>
                      </TreeRow>
                      <TreeRow $indent={31}>
                        <Branch last />
                        <HierarchyIcon />
                        <TreeLabel>É frente ímpar</TreeLabel>
                      </TreeRow>
                    </ConditionTree>
                  </ConditionColumn>
                </ItemsArea>

                <OutputPane>
                  <Highlight />
                  <RowSplitter><StackArrows /></RowSplitter>
                  <InnerTabs>
                    <TabStrip role="tablist" $columns={[262, 242, 308]}>
                      <Tab type="button" role="tab">Alternativos</Tab>
                      <Tab type="button" role="tab">Objetos</Tab>
                      <Tab type="button" role="tab" $selected aria-selected>
                        Parâmetros de Saída
                        <Pointer width="64" height="66" viewBox="0 0 64 66">
                          <path
                            d="M3 8Q2 2 8 3L12 6Q28 24 43 38 41 31 43 29 47 25 51 31 53 48 60 63 44 60 24 56 18 53 21 50 27 46 37 47 20 29 4 11z"
                            fill="#ff0c0c"
                            stroke="#fff"
                          />
                        </Pointer>
                      </Tab>
                    </TabStrip>
                    <TabPage>
                      <OutputBody>
                        <Fieldset $grow={400}>
                          <Legend>Atributos</Legend>
                          <GridFrame $height={128}>
                            <Table>
                              <Columns widths={[40, 163, 20, undefined]} />
                              <thead>
                                <tr><HeadCell /><HeadCell>Atributo</HeadCell><HeadCell /><HeadCell>Valor</HeadCell></tr>
                              </thead>
                              <tbody>
                                <tr>
                                  <RowHead scope="row"><NewMark /></RowHead>
                                  <Cell />
                                  <IconCell>
                                    <button type="button" aria-label="Procurar"><BinocularsIcon /></button>
                                  </IconCell>
                                  <Cell />
                                </tr>
                              </tbody>
                            </Table>
                          </GridFrame>
                        </Fieldset>
                        <Splitter $width={13} $top={2}><SplitArrows /></Splitter>
                        <Fieldset $grow={381}>
                          <Legend>Referências</Legend>
                          <GridFrame $height={128}>
                            <Table>
                              <Columns widths={[40, 142, undefined, 21, 21]} />
                              <thead>
                                <tr>
                                  <HeadCell /><HeadCell>Referência</HeadCell><HeadCell>Valor</HeadCell><HeadCell /><HeadCell />
                                </tr>
                              </thead>
                              <tbody>
                                <tr>
                                  <RowHead scope="row"><NewMark /></RowHead>
                                  <Cell />
                                  <Cell />
                                  <IconCell><RootIcon /></IconCell>
                                  <IconCell><SigmaIcon /></IconCell>
                                </tr>
                              </tbody>
                            </Table>
                          </GridFrame>
                        </Fieldset>
                      </OutputBody>
                    </TabPage>
                  </InnerTabs>
                  <CheckRow>
                    <Check label="Listar opções de frente da entidade de inserção" on />
                  </CheckRow>
                </OutputPane>
              </TabPage>

              <Gap $height={7} />

              <Spaced>
                <GroupFrame>
                  <GroupHeader><GroupTitle>Mensagens</GroupTitle><Collapse name="Mensagens" /></GroupHeader>
                  <MessagesBody>
                    <ColorRow>
                      <label htmlFor="color">Cor</label>
                      <ColorButton id="color" type="button"><ColorFill /></ColorButton>
                      <span>RGB: 0; 0; 64</span>
                    </ColorRow>
                    <GridFrame $height={70}>
                      <Table>
                        <Columns widths={[40, undefined]} />
                        <thead><tr><HeadCell /><HeadCell>Mensagens</HeadCell></tr></thead>
                        <tbody><tr><RowHead scope="row"><NewMark /></RowHead><Cell /></tr></tbody>
                      </Table>
                    </GridFrame>
                  </MessagesBody>
                </GroupFrame>
              </Spaced>
            </PanelContent>
          </MainPanel>
        </Workspace>
      </Window>
    </>
  );
}
